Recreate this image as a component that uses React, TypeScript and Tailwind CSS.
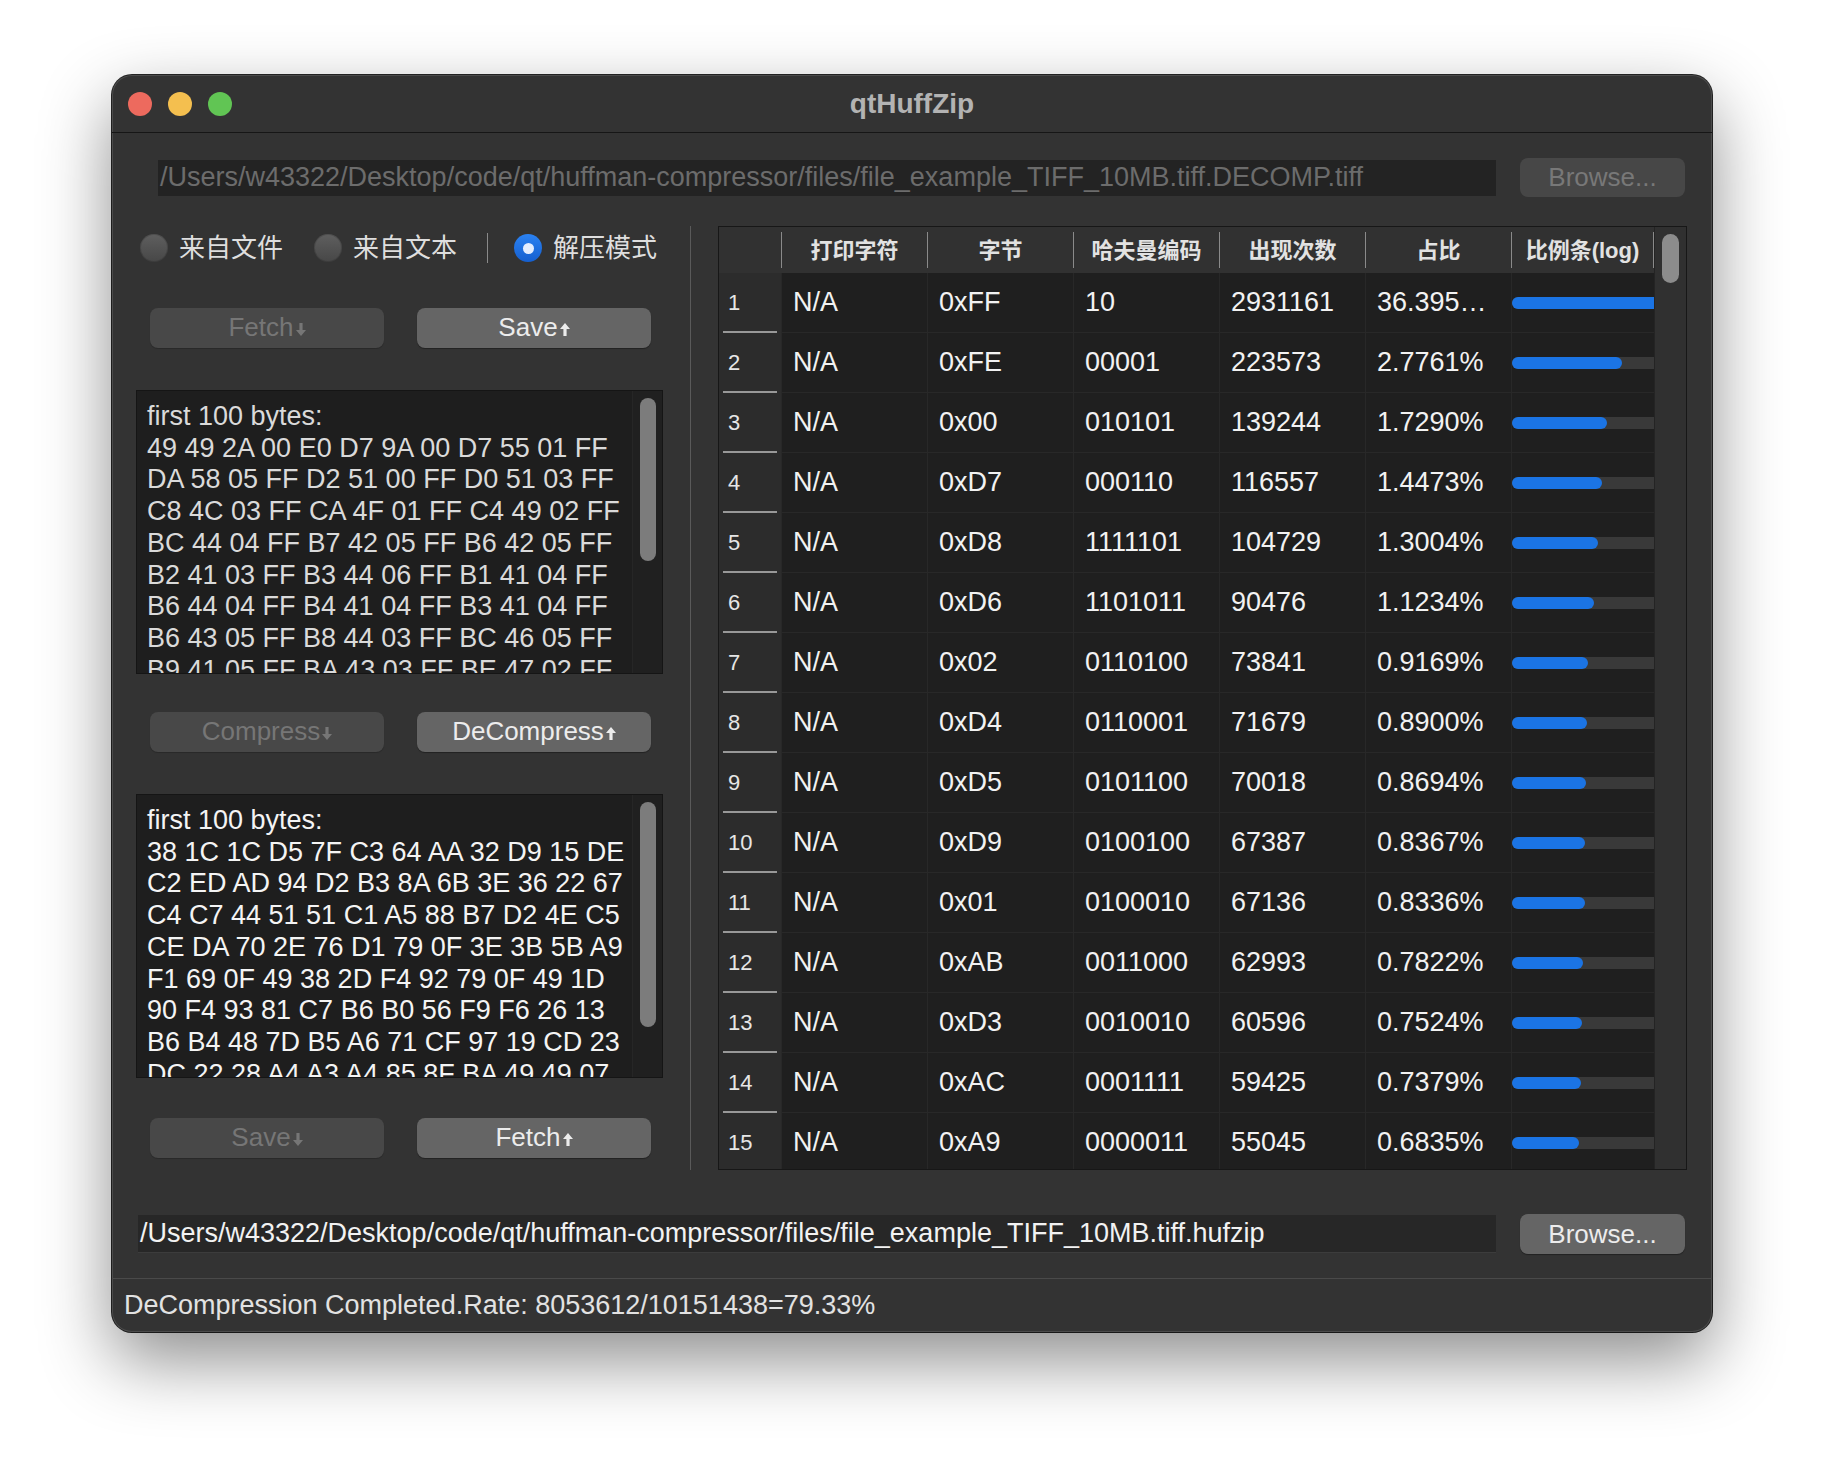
import clsx from 'clsx'

type Row = {
  code: string
  count: string
  byte: string
  rate: string
  bar: number
}

const rows: Row[] = [
  { byte: '0xFF', code: '10', count: '2931161', rate: '36.395…', bar: 160 },
  { byte: '0xFE', code: '00001', count: '223573', rate: '2.7761%', bar: 110 },
  { byte: '0x00', code: '010101', count: '139244', rate: '1.7290%', bar: 95 },
  { byte: '0xD7', code: '000110', count: '116557', rate: '1.4473%', bar: 90 },
  { byte: '0xD8', code: '1111101', count: '104729', rate: '1.3004%', bar: 86 },
  { byte: '0xD6', code: '1101011', count: '90476', rate: '1.1234%', bar: 82 },
  { byte: '0x02', code: '0110100', count: '73841', rate: '0.9169%', bar: 76 },
  { byte: '0xD4', code: '0110001', count: '71679', rate: '0.8900%', bar: 75 },
  { byte: '0xD5', code: '0101100', count: '70018', rate: '0.8694%', bar: 74 },
  { byte: '0xD9', code: '0100100', count: '67387', rate: '0.8367%', bar: 73 },
  { byte: '0x01', code: '0100010', count: '67136', rate: '0.8336%', bar: 73 },
  { byte: '0xAB', code: '0011000', count: '62993', rate: '0.7822%', bar: 71 },
  { byte: '0xD3', code: '0010010', count: '60596', rate: '0.7524%', bar: 70 },
  { byte: '0xAC', code: '0001111', count: '59425', rate: '0.7379%', bar: 69 },
  { byte: '0xA9', code: '0000011', count: '55045', rate: '0.6835%', bar: 67 },
]

const headers = ['打印字符', '字节', '哈夫曼编码', '出现次数', '占比']

const sourceLines = [
  'first 100 bytes:',
  '49 49 2A 00 E0 D7 9A 00 D7 55 01 FF',
  'DA 58 05 FF D2 51 00 FF D0 51 03 FF',
  'C8 4C 03 FF CA 4F 01 FF C4 49 02 FF',
  'BC 44 04 FF B7 42 05 FF B6 42 05 FF',
  'B2 41 03 FF B3 44 06 FF B1 41 04 FF',
  'B6 44 04 FF B4 41 04 FF B3 41 04 FF',
  'B6 43 05 FF B8 44 03 FF BC 46 05 FF',
  'B9 41 05 FF BA 43 03 FF BE 47 02 FF',
  'B8 44 03 FF B6 42 04 FF B4 41 05 FF',
]

const zippedLines = [
  'first 100 bytes:',
  '38 1C 1C D5 7F C3 64 AA 32 D9 15 DE',
  'C2 ED AD 94 D2 B3 8A 6B 3E 36 22 67',
  'C4 C7 44 51 51 C1 A5 88 B7 D2 4E C5',
  'CE DA 70 2E 76 D1 79 0F 3E 3B 5B A9',
  'F1 69 0F 49 38 2D F4 92 79 0F 49 1D',
  '90 F4 93 81 C7 B6 B0 56 F9 F6 26 13',
  'B6 B4 48 7D B5 A6 71 CF 97 19 CD 23',
  'DC 22 28 A4 A3 A4 85 8F BA 49 49 07',
  '5C 1E 22 D9 0A 61 B3 7E 44 C2 19 8D',
]

const Arrow = ({ up }: { up: boolean }) => (
  <svg width="10" height="13" viewBox="0 0 10 13" className="ml-[2px]">
    <path
      d={up ? 'M5 0 L10 6 H6.6 V13 H3.4 V6 H0 Z' : 'M5 13 L10 7 H6.6 V0 H3.4 V7 H0 Z'}
      fill="currentColor"
    />
  </svg>
)

const Button = ({ label, up, enabled }: { label: string; up: boolean; enabled: boolean }) => (
  <button
    className={clsx(
      'flex h-[40px] w-[234px] items-baseline justify-center rounded-[8px] pt-[4px] text-[26px] leading-[30px]',
      enabled
        ? 'bg-[#656565] text-[#ececec] shadow-[0_1px_1px_rgba(0,0,0,0.35)]'
        : 'bg-[#484848] text-[#767676] shadow-[0_1px_1px_rgba(0,0,0,0.2)]',
    )}
  >
    <span>{label}</span>
    <Arrow up={up} />
  </button>
)

const Radio = ({ label, checked }: { label: string; checked?: boolean }) => (
  <div className="flex items-center">
    {checked ? (
      <div className="flex h-[28px] w-[28px] items-center justify-center rounded-full bg-linear-to-b from-[#2b82f2] to-[#155fcf]">
        <div className="h-[11px] w-[11px] rounded-full bg-[#e4eeff]" />
      </div>
    ) : (
      <div className="h-[28px] w-[28px] rounded-full bg-linear-to-b from-[#5f5f5f] to-[#474747] shadow-[inset_0_0_0_1px_rgba(0,0,0,0.15)]" />
    )}
    <span className="ml-[11px] text-[26px] leading-none text-[#dedede]">{label}</span>
  </div>
)

const TextBox = ({ lines, thumb, tone }: { lines: string[]; thumb: string; tone: string }) => (
  <div className="flex h-[284px] w-[527px] border border-[#151515] bg-[#1e1e1e]">
    <div className={clsx('flex-1 overflow-hidden pl-[10px] pt-[10px] text-[27px] leading-[31.7px]', tone)}>
      {lines.map((line, i) => (
        <div key={i} className="whitespace-nowrap">
          {line}
        </div>
      ))}
    </div>
    <div className="w-[30px] border-l border-[#262626] bg-[#202020]">
      <div className={clsx('ml-[7px] mt-[7px] w-[16px] rounded-full bg-[#7c7c7c]', thumb)} />
    </div>
  </div>
)

const Table = () => (
  <div className="flex h-[944px] w-[969px] border border-[#171717] bg-[#1f1f1f]">
    <div className="flex w-[935px] flex-col overflow-hidden">
      <div className="flex h-[46px] shrink-0 items-center bg-[#313131] text-[22px] font-semibold text-[#e2e2e2]">
        <div className="w-[62px]" />
        {headers.map((h) => (
          <div key={h} className="flex items-center">
            <div className="h-[36px] w-px bg-[#8a8a8a]" />
            <div className="w-[145px] text-center">{h}</div>
          </div>
        ))}
        <div className="h-[36px] w-px bg-[#8a8a8a]" />
        <div className="w-[141px] text-center">比例条(log)</div>
        <div className="h-[36px] w-px bg-[#8a8a8a]" />
      </div>
      {rows.map((row, i) => (
        <div key={i} className="flex h-[60px] shrink-0">
          <div className="flex w-[62px] flex-col bg-[#2c2c2c]">
            <div className="flex flex-1 items-center pl-[9px] text-[22px] text-[#e6e6e6]">{i + 1}</div>
            <div className="mx-[4px] h-[2px] bg-[#999999]" />
          </div>
          {['N/A', row.byte, row.code, row.count, row.rate].map((value, j) => (
            <div
              key={j}
              className="flex w-[146px] items-center border-b border-l border-[#282828] pl-[11px] text-[27px] text-[#f2f2f2]"
            >
              {value}
            </div>
          ))}
          <div className="flex w-[143px] items-center overflow-hidden border-b border-l border-[#282828]">
            <div className="h-[12px] w-full rounded-l-full bg-[#393939]">
              <div className="h-full rounded-full bg-[#1b74e4]" style={{ width: row.bar }} />
            </div>
          </div>
        </div>
      ))}
    </div>
    <div className="w-[32px] border-l border-[#242424] bg-[#303030]">
      <div className="ml-[7px] mt-[7px] h-[49px] w-[17px] rounded-full bg-[#8c8c8c]" />
    </div>
  </div>
)

const App = () => {
  return (
    <div className="h-[1480px] w-[1824px] bg-white pl-[112px] pt-[75px] font-['Liberation_Sans','Noto_Sans_CJK_SC',sans-serif]">
      <div className="flex h-[1257px] w-[1600px] flex-col overflow-hidden rounded-[20px] bg-[#333333] shadow-[0_28px_70px_rgba(0,0,0,0.45),0_0_0_1px_rgba(0,0,0,0.85),inset_0_0_0_1px_rgba(255,255,255,0.12)]">
        <div className="flex h-[58px] shrink-0 items-center border-b border-[#161616] pl-[16px]">
          <div className="flex gap-[16px]">
            <div className="h-[24px] w-[24px] rounded-full bg-[#ed6a5e]" />
            <div className="h-[24px] w-[24px] rounded-full bg-[#f4bf4f]" />
            <div className="h-[24px] w-[24px] rounded-full bg-[#61c554]" />
          </div>
          <div className="flex-1 pr-[120px] text-center text-[28px] font-bold text-[#b3b3b3]">qtHuffZip</div>
        </div>

        <div className="mt-[25px] flex h-[39px] shrink-0 items-center gap-[24px] pl-[46px]">
          <div className="flex h-[36px] w-[1338px] items-center overflow-hidden whitespace-nowrap bg-[#232323] pl-[2px] text-[27px] text-[#6c6c6c]">
            /Users/w43322/Desktop/code/qt/huffman-compressor/files/file_example_TIFF_10MB.tiff.DECOMP.tiff
          </div>
          <button className="h-[39px] w-[165px] rounded-[8px] bg-[#474747] text-[26px] text-[#787878]">Browse...</button>
        </div>

        <div className="mt-[29px] flex h-[944px] shrink-0 pl-[24px]">
          <div className="flex w-[527px] flex-col">
            <div className="flex h-[44px] items-center pl-[4px]">
              <Radio label="来自文件" />
              <div className="ml-[31px]">
                <Radio label="来自文本" />
              </div>
              <div className="ml-[30px] h-[30px] w-px bg-[#8a8a8a]" />
              <div className="ml-[26px]">
                <Radio label="解压模式" checked />
              </div>
            </div>
            <div className="mt-[38px] flex gap-[33px] pl-[14px]">
              <Button label="Fetch" up={false} enabled={false} />
              <Button label="Save" up enabled />
            </div>
            <div className="mt-[42px]">
              <TextBox lines={sourceLines} thumb="h-[163px]" tone="text-[#dadada]" />
            </div>
            <div className="mt-[38px] flex gap-[33px] pl-[14px]">
              <Button label="Compress" up={false} enabled={false} />
              <Button label="DeCompress" up enabled />
            </div>
            <div className="mt-[42px]">
              <TextBox lines={zippedLines} thumb="h-[225px]" tone="text-[#f4f4f4]" />
            </div>
            <div className="mt-[40px] flex gap-[33px] pl-[14px]">
              <Button label="Save" up={false} enabled={false} />
              <Button label="Fetch" up enabled />
            </div>
          </div>
          <div className="ml-[27px] w-px bg-[#5a5a5a]" />
          <div className="ml-[27px]">
            <Table />
          </div>
        </div>

        <div className="mt-[44px] flex h-[40px] shrink-0 items-center gap-[24px] pl-[26px]">
          <div className="flex h-[38px] w-[1358px] items-center overflow-hidden whitespace-nowrap border-b border-[#3c3c3c] bg-[#272727] pl-[2px] text-[27px] text-[#f2f2f2]">
            /Users/w43322/Desktop/code/qt/huffman-compressor/files/file_example_TIFF_10MB.tiff.hufzip
          </div>
          <button className="h-[40px] w-[165px] rounded-[8px] bg-[#656565] text-[26px] text-[#ececec] shadow-[0_1px_1px_rgba(0,0,0,0.35)]">
            Browse...
          </button>
        </div>

        <div className="mt-[24px] flex flex-1 items-center border-t border-[#4a4a4a] pl-[12px] text-[27px] text-[#e2e2e2]">
          DeCompression Completed.Rate: 8053612/10151438=79.33%
        </div>
      </div>
    </div>
  )
}

export default App
